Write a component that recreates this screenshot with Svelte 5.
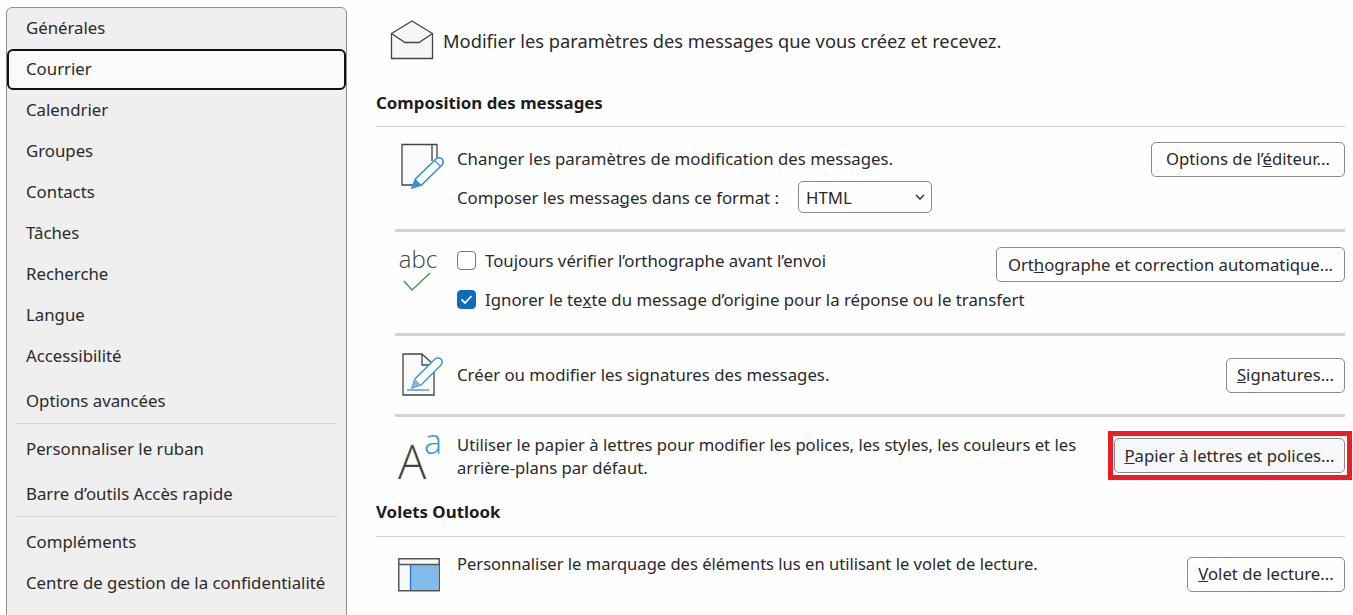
<script>
  const top = ['Générales', 'Courrier', 'Calendrier', 'Groupes', 'Contacts', 'Tâches', 'Recherche', 'Langue', 'Accessibilité'];
</script>

<div class="page">
  <nav class="side">
    {#each top as t}
      <div class="item" class:sel={t === 'Courrier'}>{t}</div>
    {/each}
    <div class="item adv">Options avancées</div>
    <div class="sep"></div>
    <div class="item tall">Personnaliser le ruban</div>
    <div class="item tall second">Barre d’outils Accès rapide</div>
    <div class="sep"></div>
    <div class="item first">Compléments</div>
    <div class="item">Centre de gestion de la confidentialité</div>
  </nav>

  <main class="main">
    <div class="intro">
      <svg width="44" height="40" viewBox="0 0 44 40">
        <path d="M1.500 13.500 22 1 42.500 13.500V38.500H1.500Z" fill="#f6f6f6" stroke="#444" stroke-width="1.300"/>
        <path d="M1.500 13.500 15 22.500H29L42.500 13.500" fill="none" stroke="#444" stroke-width="1.300"/>
      </svg>
      <span>Modifier les paramètres des messages que vous créez et recevez.</span>
    </div>

    <h2 class="head">Composition des messages</h2>

    <section class="group">
      <div class="row r1">
        <svg class="ico" width="46" height="48" viewBox="0 0 46 48">
          <path d="M1 2.500H36V16L13 43H1Z" fill="#fafafa"/>
          <path d="M13 43H1V2.500H36V16M31 2.500V19" fill="none" stroke="#444" stroke-width="1.300"/>
          <path d="M11 46 14.500 37 35 17Q38 14.500 41 17 43.500 20 41 23L20.500 43Z" fill="#fff" stroke="#3b8fd6" stroke-width="1.600"/>
          <path d="M11 46 14.500 37 20.500 43Z" fill="#3b8fd6"/>
          <path d="M33.500 18.500 39.500 24.500" stroke="#3b8fd6" stroke-width="1.300"/>
        </svg>
        <div class="lines">
          <div class="line l1">Changer les paramètres de modification des messages.</div>
          <div class="line l2">
            <span>Composer les messa<u>g</u>es dans ce format :</span>
            <div class="select"><span>HTML</span>
              <svg width="10" height="6" viewBox="0 0 10 6"><path d="M1 1 5 5 9 1" fill="none" stroke="#333" stroke-width="1.500"/></svg>
            </div>
          </div>
        </div>
        <button class="btn b1">Options de l’<u>é</u>diteur...</button>
      </div>
    </section>

    <section class="group thick">
      <div class="row r2">
        <div class="abc">
          <span>abc</span>
          <svg width="30" height="20" viewBox="0 0 30 20"><path d="M1 9 9 18 27 1" fill="none" stroke="#4a9a5c" stroke-width="1.500"/></svg>
        </div>
        <div class="lines">
          <div class="line check"><span class="box"></span>Toujours vérifier l’orthographe avant l’envoi</div>
          <div class="line check c2">
            <span class="box on">
              <svg width="13" height="11" viewBox="0 0 13 11"><path d="M1.500 5.500 5 9 11.500 2" fill="none" stroke="#fff" stroke-width="1.800"/></svg>
            </span>Ignorer le te<u>x</u>te du message d’origine pour la réponse ou le transfert
          </div>
        </div>
        <button class="btn b2">Ort<u>h</u>ographe et correction automatique...</button>
      </div>
    </section>

    <section class="group thick">
      <div class="row r3">
        <svg class="ico" width="42" height="44" viewBox="0 0 42 44">
          <path d="M1 2H20L32 13V43H1Z" fill="#fafafa" stroke="#444" stroke-width="1.300"/>
          <path d="M20 2V13H32" fill="none" stroke="#444" stroke-width="1.300"/>
          <path d="M10 36 13 27 33 7Q36 5 39 7 41.500 10 39 13L19 33Z" fill="#fff" stroke="#3b8fd6" stroke-width="1.400"/>
          <path d="M10 36 13 27 19 33Z" fill="#7db7e8"/>
          <path d="M5 38H27" stroke="#3b8fd6" stroke-width="1.300"/>
        </svg>
        <div class="lines"><div class="line">Créer ou modifier les signatures des messages.</div></div>
        <button class="btn b3"><u>S</u>ignatures...</button>
      </div>
    </section>

    <section class="group thick">
      <div class="row r4">
        <div class="aa"><span class="big">A</span><span class="small">a</span></div>
        <div class="lines para">Utiliser le papier à lettres pour modifier les polices, les styles, les couleurs et les arrière-plans par défaut.</div>
        <button class="btn b4"><u>P</u>apier à lettres et polices...</button>
      </div>
    </section>

    <h2 class="head h2">Volets Outlook</h2>

    <section class="group">
      <div class="row r5">
        <svg class="ico" width="44" height="34" viewBox="0 0 44 34">
          <rect x=".75" y=".75" width="40.500" height="32" fill="#f8f8f8" stroke="#555" stroke-width="1.500"/>
          <rect x="12.500" y="7" width="28" height="25" fill="#82bbec"/>
          <path d="M1 6.500H41" stroke="#555" stroke-width="1.300"/>
          <path d="M12.500 7V32" stroke="#1f73c0" stroke-width="1.300"/>
        </svg>
        <div class="lines"><div class="line">Personnaliser le marquage des éléments lus en utilisant le volet de lecture.</div></div>
        <button class="btn b5"><u>V</u>olet de lecture...</button>
      </div>
    </section>
  </main>
</div>

<style>
  :global(body) { margin: 0; background: #fefefe; overflow: hidden; }
  .page {
    width: 1353px; height: 615px; overflow: hidden; display: flex; align-items: flex-start;
    font-family: "Noto Sans", "Open Sans", sans-serif; font-size: 16.800px; color: #2a2a2a;
    box-sizing: border-box; padding: 7px 0 0 6px;
  }
  .side {
    width: 341px; height: 640px; box-sizing: border-box; flex: none;
    background: #efefef; border: 1px solid #8f8f8f; border-radius: 6px;
    display: flex; flex-direction: column;
  }
  .item {
    height: 41px; line-height: 39px; padding-left: 19px; box-sizing: border-box; flex: none;
    white-space: nowrap;
  }
  .item.sel {
    background: #fafafa; border: 2px solid #111; border-radius: 6px;
    padding-left: 17px; line-height: 35px;
  }
  .item.adv { height: 46px; line-height: 48px; }
  .item.tall { height: 46px; line-height: 50px; }
  .item.second { line-height: 48px; }
  .item.first { margin-top: 5px; }
  .sep { height: 1px; background: #d4d4d4; margin: 0 9px; flex: none; }
  .main { width: 969px; margin-left: 29px; flex: none; margin-top: -7px; position: relative; }
  .intro { display: flex; align-items: center; gap: 9px; padding: 20px 0 0 14px; height: 60px; box-sizing: border-box; font-size: 18.300px; }
  .head { font-size: 16.850px; font-weight: 700; margin: 0; height: 67px; line-height: 48px; padding-top: 19px; box-sizing: border-box; border-bottom: 1px solid #cfcfcf; color: #1c1c1c; }
  .group { margin-left: 19px; }
  .thick { border-top: 3px solid #d2d2d2; }
  .row { position: relative; display: flex; align-items: flex-start; box-sizing: border-box; }
  .ico, .abc, .aa { flex: none; }
  .lines { flex: 1; min-width: 0; }
  .line { white-space: nowrap; }
  .btn {
    flex: none; font: inherit; font-size: 16.700px; color: inherit; background: #fefefe; border: 1px solid #8a8a8a;
    border-radius: 5px; padding: 0; height: 35px; text-align: center; white-space: nowrap; box-sizing: border-box;
  }
  .r1 { height: 102px; padding: 15px 0 0 6px; }
  .r1 .lines { margin: 6px 0 0 10px; }
  .l1 { height: 34px; line-height: 22px; }
  .l2 { display: flex; align-items: center; gap: 19px; margin-top: -1px; }
  .select {
    width: 134px; height: 32px; box-sizing: border-box; border: 1px solid #8a8a8a; border-radius: 5px;
    display: flex; align-items: center; justify-content: space-between; padding: 0 6px 0 7px;
  }
  .b1 { width: 194px; padding-bottom: 2px; }
  .r2 { height: 101px; padding: 14px 0 0 5px; }
  .r2 .lines { margin: 3px 0 0 21px; }
  .abc { width: 36px; display: flex; flex-direction: column; align-items: center; font-family: "Open Sans", sans-serif; font-weight: 300; font-size: 24px; line-height: 26px; color: #444; }
  .check { display: flex; align-items: center; height: 22px; white-space: pre; }
  .check.c2 { margin-top: 17px; }
  .box { width: 19px; height: 19px; border: 1.500px solid #777; border-radius: 4px; box-sizing: border-box; margin-right: 9px; flex: none; background: #fff; display: flex; align-items: center; justify-content: center; }
  .box.on { background: #0f6cbd; border-color: #0f6cbd; }
  .b2 { width: 349px; margin-top: 1px; }
  .r3 { height: 78px; padding: 16px 0 0 7px; }
  .r3 .lines { margin: 12px 0 0 13px; }
  .r3 .line { line-height: 22px; }
  .b3 { width: 119px; margin-top: 6px; padding-bottom: 2px; }
  .r4 { height: 80px; padding: 15px 0 0 3px; }
  .aa { width: 59px; height: 50px; position: relative; color: #444; font-family: "Open Sans", sans-serif; font-weight: 300; }
  .aa .big { position: absolute; left: 0; top: 4px; font-size: 47px; line-height: 50px; }
  .aa .small { position: absolute; left: 26px; top: -9px; font-size: 34px; line-height: 36px; color: #2f97d8; }
  .para { line-height: 23px; margin: 1px 32px 0 0; font-size: 16.650px; }
  .b4 { width: 231px; margin-top: 6px; background: #f6f7f7; position: relative; }
  .b4::after { content: ""; position: absolute; inset: -8px -8px -8px -7px; border: 5px solid #ed1c24; pointer-events: none; }
  .h2 { margin-top: -8px; padding-top: 0; line-height: 46px; height: 48px; }
  .r5 { height: 80px; padding: 21px 0 0 3px; }
  .r5 .lines { margin: -5px 0 0 15px; font-size: 16.560px; }
  .r5 .line { line-height: 22px; }
  .b5 { width: 158px; margin-top: -1px; padding-bottom: 2px; }
</style>
